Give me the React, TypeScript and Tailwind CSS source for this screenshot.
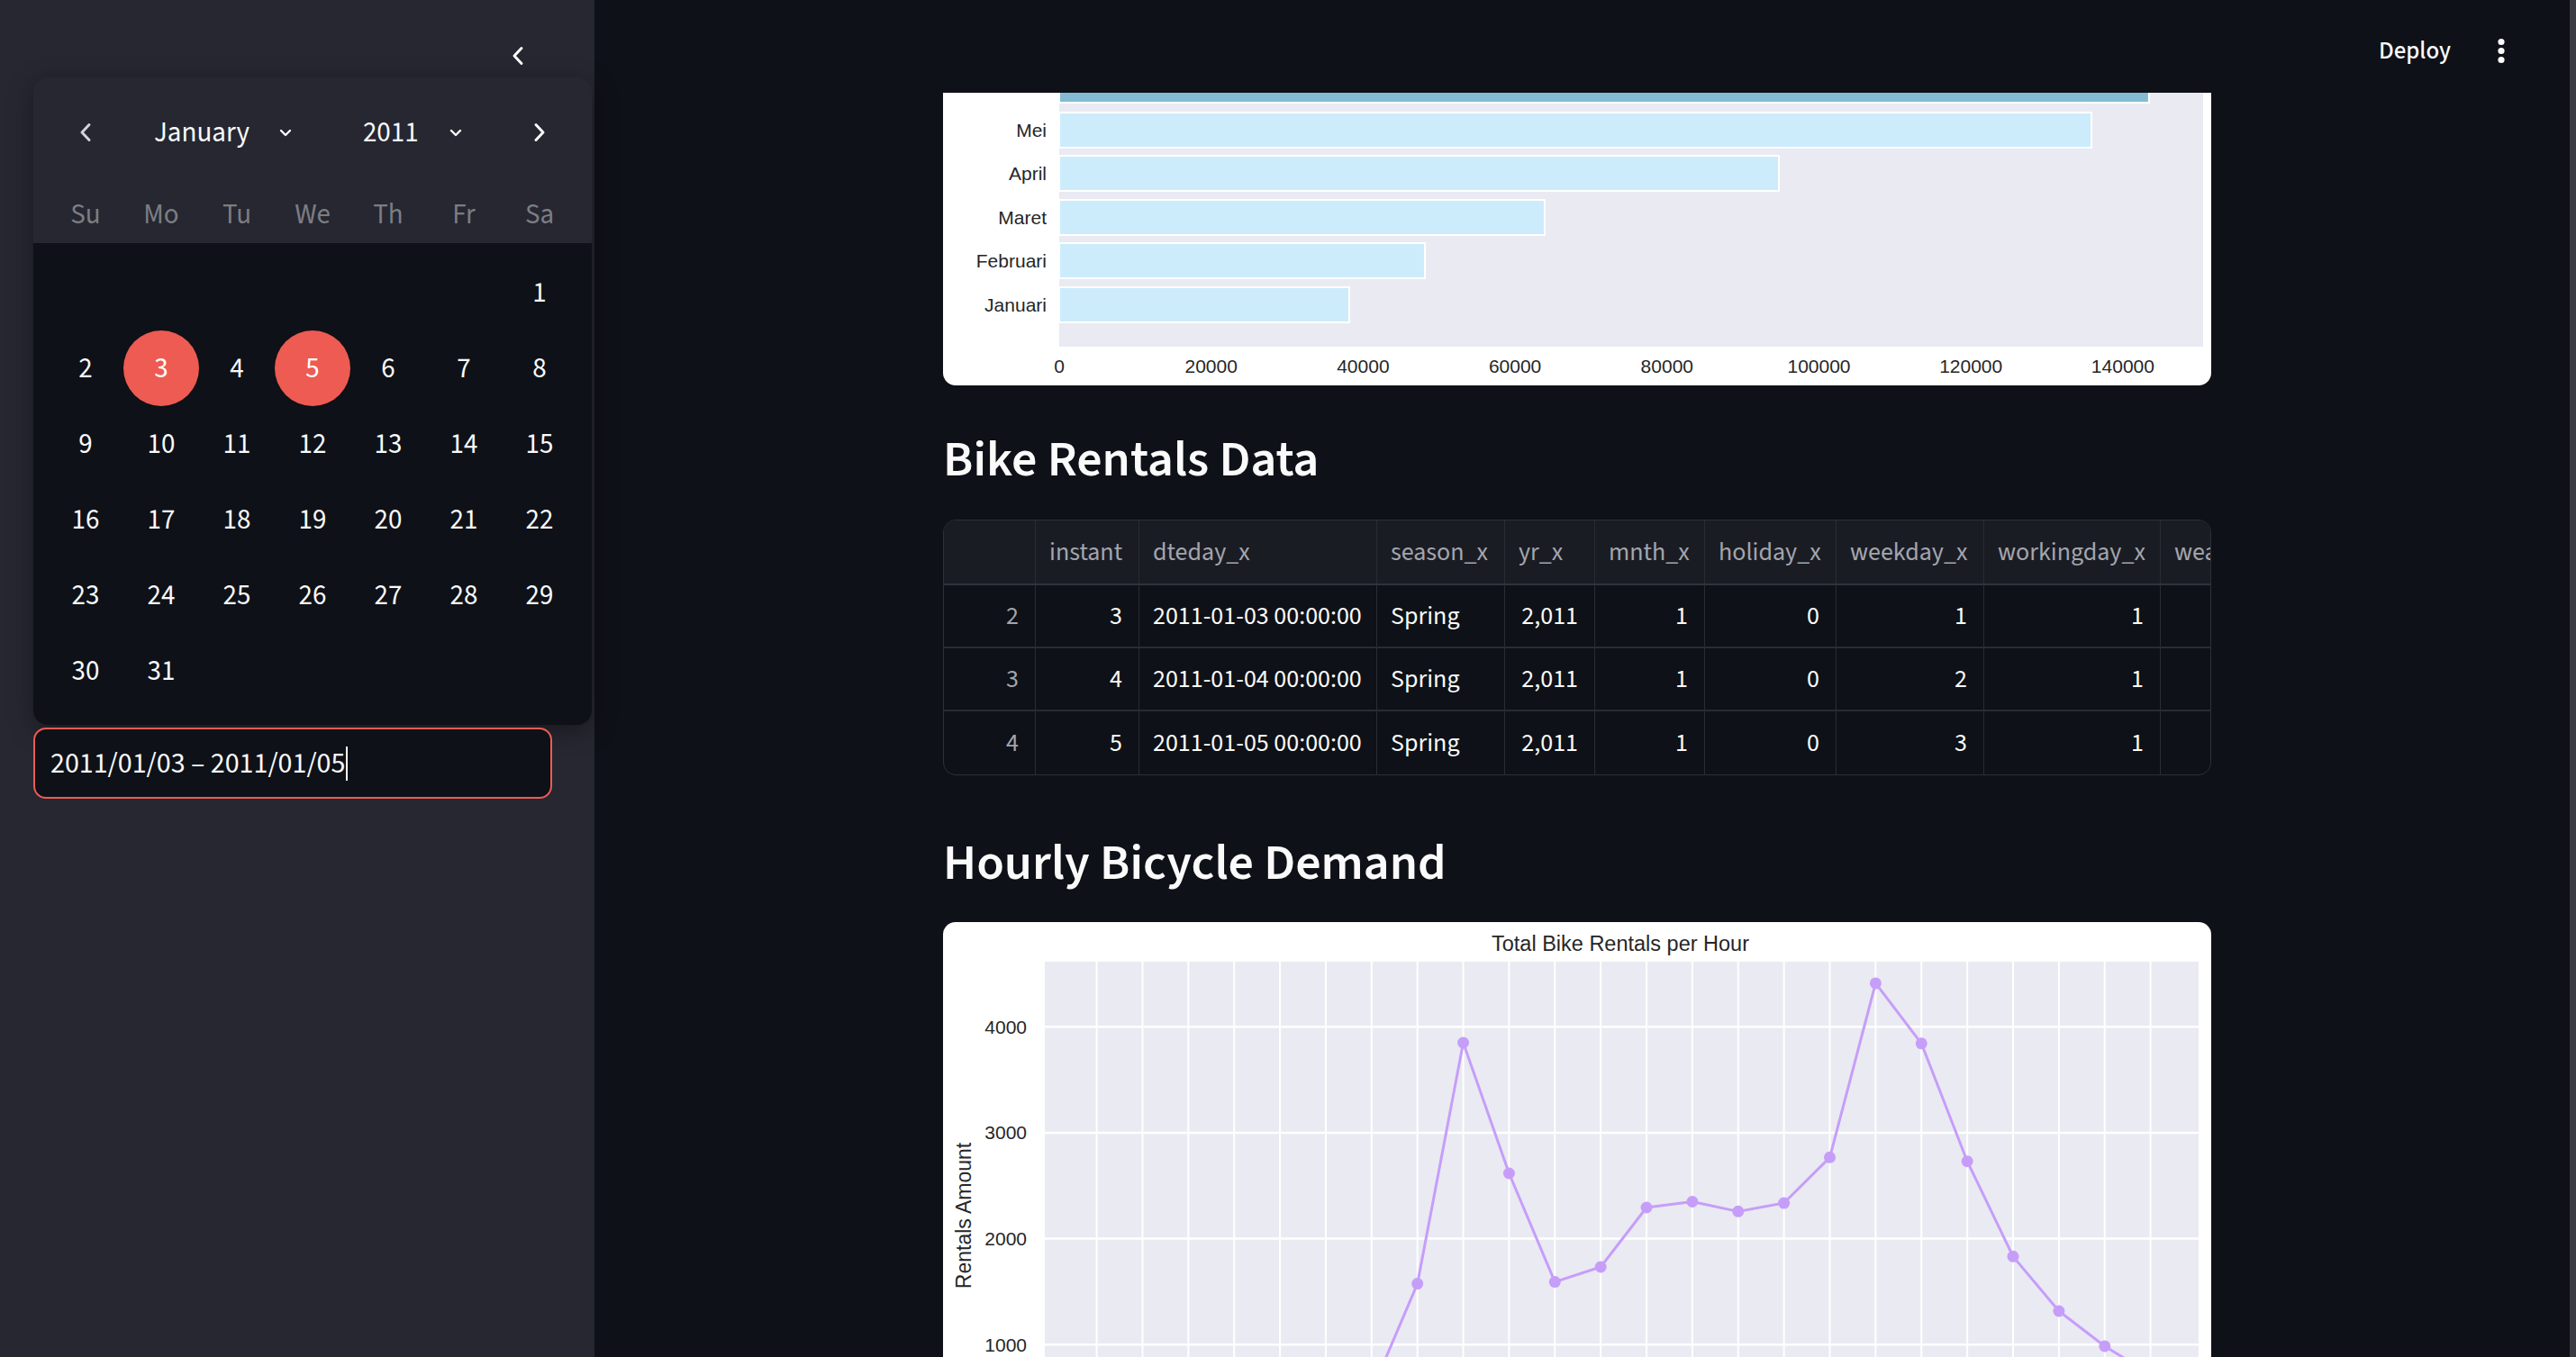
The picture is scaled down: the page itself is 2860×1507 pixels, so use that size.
import React from 'react';

const SANS = "font-['Source_Sans_3','Source_Sans_Pro',Lato,sans-serif]";
const CHART_FONT = 'Liberation Sans, Arial, sans-serif';

const WEEKDAYS = ['Su', 'Mo', 'Tu', 'We', 'Th', 'Fr', 'Sa'];
const DAYS: (number | null)[] = [
  null, null, null, null, null, null,
  ...Array.from({ length: 31 }, (_, i) => i + 1),
];
const SELECTED = [3, 5];

const MONTH_BARS = [
  { label: 'Juni', value: 143440, top: true },
  { label: 'Mei', value: 135870 },
  { label: 'April', value: 94720 },
  { label: 'Maret', value: 63900 },
  { label: 'Februari', value: 48130 },
  { label: 'Januari', value: 38170 },
];

const HOURLY = [
  300, 180, 120, 60, 50, 170, 560, 1575, 3849, 2617, 1592, 1733,
  2294, 2349, 2257, 2336, 2767, 4410, 3842, 2730, 1832, 1317, 986, 720,
];

const COLUMNS = [
  { key: 'idx', label: '', w: 102 },
  { key: 'instant', label: 'instant', w: 115 },
  { key: 'dteday_x', label: 'dteday_x', w: 264 },
  { key: 'season_x', label: 'season_x', w: 142 },
  { key: 'yr_x', label: 'yr_x', w: 100 },
  { key: 'mnth_x', label: 'mnth_x', w: 122 },
  { key: 'holiday_x', label: 'holiday_x', w: 146 },
  { key: 'weekday_x', label: 'weekday_x', w: 164 },
  { key: 'workingday_x', label: 'workingday_x', w: 196 },
  { key: 'weathersit_x', label: 'weathersit_x', w: 0 },
];

const ROWS = [
  ['2', '3', '2011-01-03 00:00:00', 'Spring', '2,011', '1', '0', '1', '1', ''],
  ['3', '4', '2011-01-04 00:00:00', 'Spring', '2,011', '1', '0', '2', '1', ''],
  ['4', '5', '2011-01-05 00:00:00', 'Spring', '2,011', '1', '0', '3', '1', ''],
];

// colonnes alignées à gauche dans le corps du tableau
const LEFT_COLS = [2, 3];

function ChevronLeft({ className = '' }: { className?: string }) {
  return (
    <svg width="14" height="22" viewBox="0 0 14 22" className={className}>
      <path d="M11 2.5 L3 11 L11 19.5" fill="none" stroke="currentColor" strokeWidth="3" strokeLinecap="round" strokeLinejoin="round" />
    </svg>
  );
}

function ChevronRight({ className = '' }: { className?: string }) {
  return (
    <svg width="14" height="22" viewBox="0 0 14 22" className={className}>
      <path d="M3 2.5 L11 11 L3 19.5" fill="none" stroke="currentColor" strokeWidth="3" strokeLinecap="round" strokeLinejoin="round" />
    </svg>
  );
}

function ChevronDown() {
  return (
    <svg width="14" height="9" viewBox="0 0 14 9">
      <path d="M2 2 L7 7 L12 2" fill="none" stroke="currentColor" strokeWidth="2.4" strokeLinecap="round" strokeLinejoin="round" />
    </svg>
  );
}

function Sidebar() {
  return (
    <aside className="flex w-[660px] shrink-0 flex-col bg-[#262730] pl-[37px]">
      <div className="flex h-[86px] justify-end pr-[78px] pt-[51px]">
        <ChevronLeft className="text-[#fafafa]" />
      </div>

      {/* Calendrier */}
      <div className="w-[620px] overflow-hidden rounded-[16px] shadow-[0_6px_28px_rgba(0,0,0,0.35)]">
        <div className="bg-[#262730] px-[16px] pt-[32px]">
          <div className="flex h-[58px] items-center">
            <div className="flex w-[84px] justify-center text-[#d4d4d8]">
              <ChevronLeft />
            </div>
            <div className="flex flex-1 items-center gap-[79px] pl-[34px] text-[31px] text-[#fafafa]">
              <div className="flex items-center gap-[33px]">
                <span>January</span>
                <ChevronDown />
              </div>
              <div className="flex items-center gap-[34px]">
                <span>2011</span>
                <ChevronDown />
              </div>
            </div>
            <div className="flex w-[84px] justify-center text-[#fafafa]">
              <ChevronRight />
            </div>
          </div>
          <div className="mt-[30px] grid h-[64px] grid-cols-7 items-center">
            {WEEKDAYS.map((d) => (
              <span key={d} className="text-center text-[31px] text-[#7c7d84]">{d}</span>
            ))}
          </div>
        </div>
        <div className="bg-[#0e1117] px-[16px] pb-[18px] pt-[13px]">
          <div className="grid grid-cols-7">
            {DAYS.map((d, i) => (
              <div key={i} className="flex h-[84px] items-center justify-center">
                {d !== null && (
                  <span
                    className={
                      SELECTED.includes(d)
                        ? 'flex h-[84px] w-[84px] items-center justify-center rounded-full bg-[#ee5b52] text-[31px] text-white'
                        : 'text-[31px] text-[#fafafa]'
                    }
                  >
                    {d}
                  </span>
                )}
              </div>
            ))}
          </div>
        </div>
      </div>

      {/* Champ de date */}
      <div className="mt-[3px] flex h-[79px] w-[576px] items-center rounded-[14px] border-2 border-[#ee5b52] bg-[#0e1117] pl-[17px]">
        <span className="text-[32px] text-[#fafafa]">2011/01/03 – 2011/01/05</span>
        <span className="ml-[1px] h-[38px] w-[2px] bg-[#fafafa]" />
      </div>
    </aside>
  );
}

function MonthBarChart() {
  const x0 = 129;
  const unit = 168.7 / 20000;
  const ticks = [0, 20000, 40000, 60000, 80000, 100000, 120000, 140000];
  const tops = [-28, 22, 70, 119, 167, 216];
  return (
    <svg width="1408" height="325" style={{ fontFamily: CHART_FONT }}>
      <rect x={x0} y={0} width={1270} height={282} fill="#eaeaf2" />
      {MONTH_BARS.map((b, i) => (
        <g key={b.label}>
          <rect
            x={x0}
            y={tops[i]}
            width={b.value * unit}
            height={39}
            fill={b.top ? '#84bbd4' : '#ccecfc'}
            stroke="#ffffff"
            strokeWidth={2}
          />
          <text x={115} y={tops[i] + 27} textAnchor="end" fontSize={21} fill="#262626">
            {b.label}
          </text>
        </g>
      ))}
      {ticks.map((t) => (
        <text key={t} x={x0 + t * unit} y={311} textAnchor="middle" fontSize={21} fill="#262626">
          {t}
        </text>
      ))}
    </svg>
  );
}

function HourlyChart() {
  const hx = (h: number) => 170.6 + 50.87 * h;
  const vy = (v: number) => 587 - 0.1177 * v;
  const points = HOURLY.map((v, h) => `${hx(h)},${vy(v)}`).join(' ');
  return (
    <svg width="1408" height="484" style={{ fontFamily: CHART_FONT }}>
      <text x={752} y={32} textAnchor="middle" fontSize={23.5} fill="#262626">
        Total Bike Rentals per Hour
      </text>
      <rect x={113} y={44} width={1281} height={460} fill="#eaeaf2" />
      {HOURLY.map((_, h) => (
        <line key={h} x1={hx(h)} x2={hx(h)} y1={44} y2={484} stroke="#ffffff" strokeWidth={2} />
      ))}
      {[1000, 2000, 3000, 4000].map((v) => (
        <g key={v}>
          <line x1={113} x2={1394} y1={vy(v)} y2={vy(v)} stroke="#ffffff" strokeWidth={2.5} />
          <text x={93} y={vy(v) + 7.5} textAnchor="end" fontSize={21} fill="#262626">
            {v}
          </text>
        </g>
      ))}
      <text
        x={31}
        y={326}
        transform="rotate(-90 31 326)"
        textAnchor="middle"
        fontSize={23}
        fill="#262626"
      >
        Rentals Amount
      </text>
      <polyline points={points} fill="none" stroke="#c69ef9" strokeWidth={3} strokeLinejoin="round" />
      {HOURLY.map((v, h) => (
        <circle key={h} cx={hx(h)} cy={vy(v)} r={6.5} fill="#c69ef9" />
      ))}
    </svg>
  );
}

function DataTable() {
  const template = COLUMNS.map((c) => (c.w ? `${c.w}px` : '1fr')).join(' ');
  return (
    <div className="overflow-hidden rounded-[14px] border border-[#2e3037] text-[28px]">
      <div className="grid h-[72px] border-b-2 border-[#30323a] bg-[#1a1c24]" style={{ gridTemplateColumns: template }}>
        {COLUMNS.map((c, i) => (
          <div
            key={c.key}
            className={`flex items-center overflow-hidden whitespace-nowrap pl-[15px] text-[#a3a5ad] ${i < COLUMNS.length - 1 ? 'border-r border-[#2a2c33]' : ''}`}
          >
            {c.label}
          </div>
        ))}
      </div>
      {ROWS.map((row, r) => (
        <div
          key={r}
          className={`grid h-[70px] ${r < ROWS.length - 1 ? 'border-b-2 border-[#2a2c33]' : ''}`}
          style={{ gridTemplateColumns: template }}
        >
          {row.map((cell, i) => (
            <div
              key={i}
              className={`flex items-center overflow-hidden whitespace-nowrap px-[18px] ${
                LEFT_COLS.includes(i) ? 'justify-start pl-[15px]' : 'justify-end'
              } ${i === 0 ? 'text-[#a3a5ad]' : 'text-[#fafafa]'} ${i < row.length - 1 ? 'border-r border-[#2a2c33]' : ''}`}
            >
              {cell}
            </div>
          ))}
        </div>
      ))}
    </div>
  );
}

function Main() {
  return (
    <main className="flex min-w-0 flex-1 flex-col">
      <header className="flex h-[103px] shrink-0 items-center justify-end gap-[52px] pr-[72px] pt-[11px]">
        <span className="text-[27px] font-medium text-[#fafafa]">Deploy</span>
        <svg width="8" height="30" viewBox="0 0 8 30" className="text-[#fafafa]">
          <circle cx="4" cy="4.5" r="3.6" fill="currentColor" />
          <circle cx="4" cy="14.5" r="3.6" fill="currentColor" />
          <circle cx="4" cy="24.5" r="3.6" fill="currentColor" />
        </svg>
      </header>

      <div className="pr-[11px]">
        <div className="mx-auto w-[1408px]">
          <div className="h-[325px] overflow-hidden rounded-b-[14px] bg-white">
            <MonthBarChart />
          </div>

          <h2 className="mt-[52px] text-[56px] font-semibold leading-[61px] text-[#fafafa]">Bike Rentals Data</h2>

          <div className="mt-[36px]">
            <DataTable />
          </div>

          <h2 className="mt-[67px] text-[56px] font-semibold leading-[61px] text-[#fafafa]">Hourly Bicycle Demand</h2>

          <div className="mt-[35px] h-[484px] overflow-hidden rounded-t-[14px] bg-white">
            <HourlyChart />
          </div>
        </div>
      </div>
    </main>
  );
}

export default function App() {
  return (
    <div className={`flex h-[1507px] w-full overflow-hidden bg-[#0e1117] ${SANS}`}>
      <Sidebar />
      <Main />
      <div className="w-[7px] shrink-0 bg-[#3a3b41]" />
    </div>
  );
}
